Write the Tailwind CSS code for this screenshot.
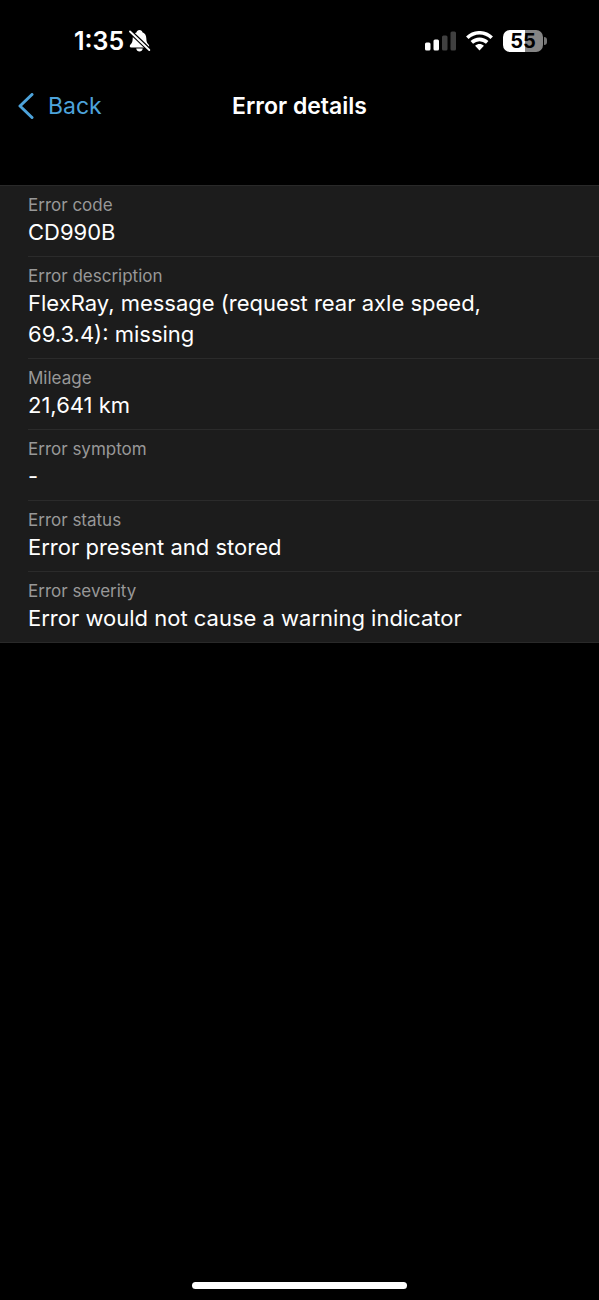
<!DOCTYPE html>
<html lang="en">
<head>
<meta charset="utf-8">
<meta name="viewport" content="width=device-width, initial-scale=1">
<title>Error details</title>
<script src="https://cdn.jsdelivr.net/npm/@tailwindcss/browser@4"></script>
</head>
<body class="flex min-h-screen flex-col bg-black font-['Inter',sans-serif] text-white">
  <div class="flex h-20 items-center justify-between pt-px pr-[52px] pl-[74px]">
    <div class="flex items-center gap-1">
      <span class="text-[25px] leading-8 font-semibold">1:35</span>
      <svg class="h-6 w-6" viewBox="0 0 24 24" role="img" aria-label="Silent mode">
        <path fill="#fff" d="M11.500 1C9.800 1 8.900 2 8.600 3.200C5.900 4.300 4.800 6.400 4.700 9.200C4.600 12.500 4.100 13.800 2.700 15.300C1.300 16.700 1.500 18.500 3.300 18.500H19.700C21.500 18.500 21.700 16.700 20.300 15.300C18.900 13.800 18.400 12.500 18.300 9.200C18.200 6.400 17.100 4.300 14.400 3.200C14.100 2 13.200 1 11.500 1ZM8.200 19.600H14.800C14.500 21.500 13.200 22.500 11.500 22.500S8.500 21.500 8.200 19.600Z"/>
        <path stroke="#000" stroke-width="4.400" d="M1 1.500L22 21.500"/>
        <path stroke="#fff" stroke-width="1.900" stroke-linecap="round" d="M2 2.500L21.300 21"/>
      </svg>
    </div>
    <div class="flex items-center gap-[10px]">
      <svg class="h-5 w-[31px]" viewBox="0 0 31 20" role="img" aria-label="Signal: 2 of 4 bars">
        <g fill="#fff"><rect x="0" y="11.500" width="5.500" height="8" rx="1.500"/><rect x="8.500" y="8.500" width="5.500" height="11" rx="1.500"/></g>
        <g fill="#404040"><rect x="17" y="4.500" width="5.500" height="15" rx="1.500"/><rect x="25.500" y=".5" width="5.500" height="19" rx="1.500"/></g>
      </svg>
      <svg class="h-5 w-[27px]" viewBox="0 0 27 20" role="img" aria-label="Wi-Fi">
        <g fill="none" stroke="#fff" stroke-width="3.600"><path d="M1.300 6.800C8.200 .1 18.800 .1 25.700 6.800"/><path d="M5.800 11.400C10.200 7.300 16.800 7.300 21.200 11.400"/></g>
        <path fill="#fff" d="M9.100 14.700C11.600 12.500 15.400 12.500 17.900 14.700L13.500 19.400Z"/>
      </svg>
      <div class="flex items-center gap-px" role="img" aria-label="Battery 55%">
        <span class="flex h-[22px] w-10 items-center justify-center rounded-[7px] bg-linear-to-r from-white from-55% to-[#858585] to-55% text-xl leading-[22px] font-bold text-black">55</span>
        <span class="h-2 w-[3px] rounded-r-full bg-[#757575]"></span>
      </div>
    </div>
  </div>

  <header class="grid h-[105px] grid-cols-[1fr_auto_1fr] items-start px-[18px] pt-2">
    <button type="button" class="flex h-9 items-center gap-[14px] justify-self-start text-[23px] text-[#4da3db]">
      <svg class="h-[27px] w-4" viewBox="0 0 16 27" fill="none" stroke="currentColor" stroke-width="3" stroke-linecap="round" stroke-linejoin="round" aria-hidden="true"><path d="M14 1.500L2 13L14 24.500"/></svg>
      Back
    </button>
    <h1 class="text-[23px] leading-9 font-semibold">Error details</h1>
  </header>

  <main>
    <dl class="border-y border-[#292929] bg-[#1c1c1c] pl-7">
      <div class="border-b border-[#2b2b2b] pt-[9px] pr-20 pb-2">
        <dt class="text-[17px] leading-5 text-[#989898]">Error code</dt>
        <dd class="mt-[2px] text-[22px] leading-[31px]">CD990B</dd>
      </div>
      <div class="border-b border-[#2b2b2b] pt-[9px] pr-20 pb-2">
        <dt class="text-[17px] leading-5 text-[#989898]">Error description</dt>
        <dd class="mt-[2px] text-[22px] leading-[31px]">FlexRay, message (request rear axle speed, 69.3.4): missing</dd>
      </div>
      <div class="border-b border-[#2b2b2b] pt-[9px] pr-20 pb-2">
        <dt class="text-[17px] leading-5 text-[#989898]">Mileage</dt>
        <dd class="mt-[2px] text-[22px] leading-[31px]">21,641 km</dd>
      </div>
      <div class="border-b border-[#2b2b2b] pt-[9px] pr-20 pb-2">
        <dt class="text-[17px] leading-5 text-[#989898]">Error symptom</dt>
        <dd class="mt-[2px] text-[22px] leading-[31px]">-</dd>
      </div>
      <div class="border-b border-[#2b2b2b] pt-[9px] pr-20 pb-2">
        <dt class="text-[17px] leading-5 text-[#989898]">Error status</dt>
        <dd class="mt-[2px] text-[22px] leading-[31px]">Error present and stored</dd>
      </div>
      <div class="pt-[9px] pr-20 pb-2">
        <dt class="text-[17px] leading-5 text-[#989898]">Error severity</dt>
        <dd class="mt-[2px] text-[22px] leading-[31px]">Error would not cause a warning indicator</dd>
      </div>
    </dl>
  </main>

  <div class="mx-auto mt-auto mb-[11px] h-[7px] w-[215px] rounded-full bg-white"></div>
</body>
</html>
